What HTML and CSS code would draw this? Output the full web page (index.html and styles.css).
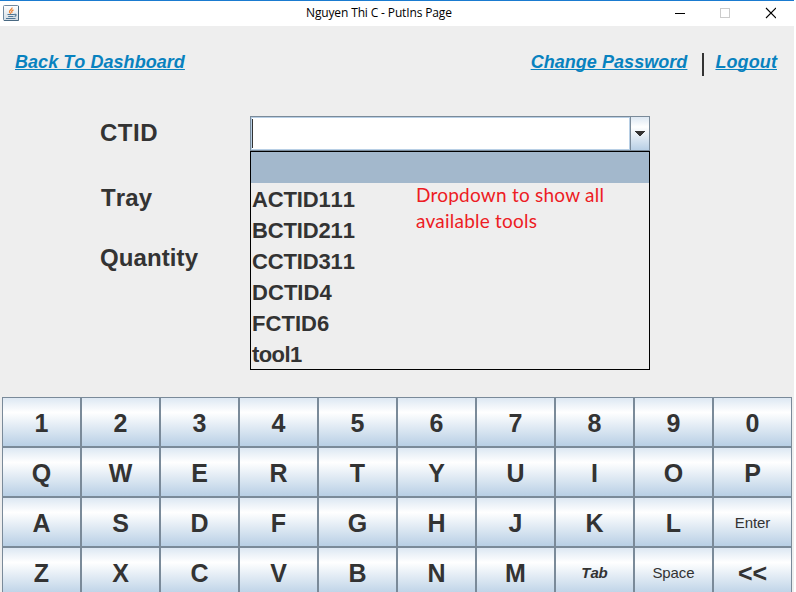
FILE: index.html
```
<!DOCTYPE html>
<html lang="en">
<head>
<meta charset="utf-8">
<title>Nguyen Thi C - PutIns Page</title>
<link rel="stylesheet" href="styles.css">
</head>
<body>
<div class="window">
  <header class="titlebar">
    <svg class="app-icon" width="16" height="16" viewBox="0 0 16 16">
      <defs><linearGradient id="tile" x1="0" y1="0" x2="0" y2="1"><stop offset="0" stop-color="#fff"/><stop offset="1" stop-color="#d3dce4"/></linearGradient></defs>
      <rect x=".5" y=".5" width="15" height="15" rx="1" fill="url(#tile)" stroke="#7089a0"/>
      <path d="M15.5 1v14.500H1" fill="none" stroke="#496982"/>
      <path d="M9 2.500C9.500 4.500 6 5 6.500 7 6.700 7.800 7.600 8 7.700 8.800M10.500 4.800C8.400 5.800 8.300 6.600 9.200 7.800" fill="none" stroke="#ee8435" stroke-width="1.3"/>
      <path d="M4.500 9.500h6.500M5.200 11.500h5.300M11 9.500c2.500-1 2.800 1.200.5 2M3 13.500h9.500" fill="none" stroke="#4f7695" stroke-width="1.2"/>
    </svg>
    <div class="title">Nguyen Thi C - PutIns Page</div>
    <svg class="controls" width="101" height="12" viewBox="0 0 101 12" shape-rendering="crispEdges">
      <path d="M0 6.500h10" stroke="#000"/>
      <rect x="45.500" y="1.500" width="9" height="9" fill="none" stroke="#ccc"/>
      <path d="M91 1l10 10M101 1L91 11" stroke="#000" stroke-width="1.1" shape-rendering="auto"/>
    </svg>
  </header>
  <nav class="links">
    <a class="back">Back To Dashboard</a>
    <a class="change">Change Password</a>
    <span class="divider"></span>
    <a class="logout">Logout</a>
  </nav>
  <main class="form">
    <div class="labels">
      <label class="ctid">CTID</label>
      <label class="tray">Tray</label>
      <label class="quantity">Quantity</label>
    </div>
    <div class="field">
      <div class="combo">
        <div class="input"><span class="caret"></span></div>
        <div class="arrow"><svg width="10" height="5" viewBox="0 0 10 5" shape-rendering="crispEdges"><path d="M0 0h10v1H9v1H8v1H7v1H6v1H4V4H3V3H2V2H1V1H0z" fill="#333"/></svg></div>
      </div>
      <div class="popup">
        <ul class="options">
          <li class="selected"></li>
          <li>ACTID111</li>
          <li>BCTID211</li>
          <li>CCTID311</li>
          <li class="wide">DCTID4</li>
          <li class="wide">FCTID6</li>
          <li class="tight">tool1</li>
        </ul>
        <p class="note">Dropdown to show all<br>available tools</p>
      </div>
    </div>
  </main>
  <section class="keyboard">
    <div class="key">1</div><div class="key">2</div><div class="key">3</div><div class="key">4</div><div class="key">5</div><div class="key">6</div><div class="key">7</div><div class="key">8</div><div class="key">9</div><div class="key">0</div>
    <div class="key">Q</div><div class="key">W</div><div class="key">E</div><div class="key">R</div><div class="key">T</div><div class="key">Y</div><div class="key">U</div><div class="key">I</div><div class="key">O</div><div class="key">P</div>
    <div class="key">A</div><div class="key">S</div><div class="key">D</div><div class="key">F</div><div class="key">G</div><div class="key">H</div><div class="key">J</div><div class="key">K</div><div class="key">L</div><div class="key small">Enter</div>
    <div class="key">Z</div><div class="key">X</div><div class="key">C</div><div class="key">V</div><div class="key">B</div><div class="key">N</div><div class="key">M</div><div class="key small tab">Tab</div><div class="key small">Space</div><div class="key">&lt;&lt;</div>
  </section>
</div>
</body>
</html>
```
FILE: styles.css
```
* { box-sizing: border-box; }
body {
  margin: 0;
  overflow: hidden;
  background: #fff;
  font-family: "Liberation Sans", Arial, sans-serif;
  color: #333;
  font-kerning: none;
}
.window {
  width: 794px;
  height: 592px;
  overflow: hidden;
  background: #eee;
}
.titlebar {
  display: flex;
  align-items: flex-start;
  height: 26px;
  border-top: 1px solid #1a7bd0;
  background: #fff;
}
.app-icon { margin: 4px 0 0 3px; }
.title {
  width: 147px;
  margin: 4px 0 0 287px;
  font: 12px/16px "Open Sans", "Noto Sans", sans-serif;
  letter-spacing: -0.14px;
  white-space: nowrap;
  color: #000;
}
.controls { margin: 6px 0 0 222px; }
.links {
  display: flex;
  height: 90px;
  padding: 25px 17px 0 15px;
  font-size: 18px;
  font-weight: bold;
  font-style: italic;
  line-height: 22px;
  color: #0882bf;
  white-space: nowrap;
}
.links a {
  height: 22px;
  text-decoration: underline;
  text-decoration-thickness: 1px;
  text-underline-offset: 1px;
  text-decoration-skip-ink: none;
}
.back { letter-spacing: 0.05px; }
.change { margin-left: auto; letter-spacing: 0.05px; }
.divider {
  width: 2px;
  height: 23px;
  margin: 2px 11px 0 15px;
  background: #333;
}
.logout { letter-spacing: 0.1px; }
.form {
  display: flex;
  height: 281px;
  padding-left: 100px;
}
.labels {
  display: flex;
  flex-direction: column;
  width: 150px;
  font-size: 24px;
  font-weight: bold;
  line-height: 30px;
  letter-spacing: 0.1px;
}
.ctid { margin-top: 2px; letter-spacing: 0.5px; }
.tray { margin-top: 35px; padding-left: 1px; }
.quantity { margin-top: 30px; }
.field { width: 400px; }
.combo {
  display: flex;
  height: 35px;
  border: 1px solid #7a8a99;
}
.input {
  flex: 1;
  padding: 1px 0 0 0;
  border: 1px solid #b8cfe5;
  background: #fff;
}
.caret {
  display: block;
  width: 1px;
  height: 29px;
  background: #333;
}
.arrow {
  display: flex;
  align-items: center;
  justify-content: center;
  width: 19px;
  border-left: 1px solid #7a8a99;
  background: linear-gradient(#dde8f3 0%, #fff 30%, #b8cfe5 100%);
}
.popup {
  position: relative;
  height: 219px;
  border: 1px solid #000;
}
.options {
  margin: 0;
  padding: 0;
  list-style: none;
  font-size: 22px;
  font-weight: bold;
  line-height: 33px;
  letter-spacing: -0.15px;
}
.options li { height: 31px; padding-left: 1px; }
.options .selected { background: #a3b8cc; }
.options .wide { letter-spacing: 0.05px; }
.options .tight { letter-spacing: -0.6px; }
.note {
  position: absolute;
  left: 165px;
  top: 30px;
  margin: 0;
  font: 19px/26px Lato, sans-serif;
  letter-spacing: 0.23px;
  color: #ed1c24;
  white-space: nowrap;
}
.keyboard {
  display: grid;
  grid-template-columns: repeat(10, 79px);
  grid-auto-rows: 50px;
  margin-left: 2px;
}
.key {
  display: flex;
  align-items: center;
  justify-content: center;
  padding-top: 3px;
  border: 1px solid #7a8a99;
  background: linear-gradient(#dde8f3 0%, #fff 30%, #b8cfe5 100%);
  font-size: 25px;
  font-weight: bold;
}
.small { padding-top: 1px; font-size: 15px; font-weight: normal; letter-spacing: -0.1px; }
.tab { font-weight: bold; font-style: italic; }
```
